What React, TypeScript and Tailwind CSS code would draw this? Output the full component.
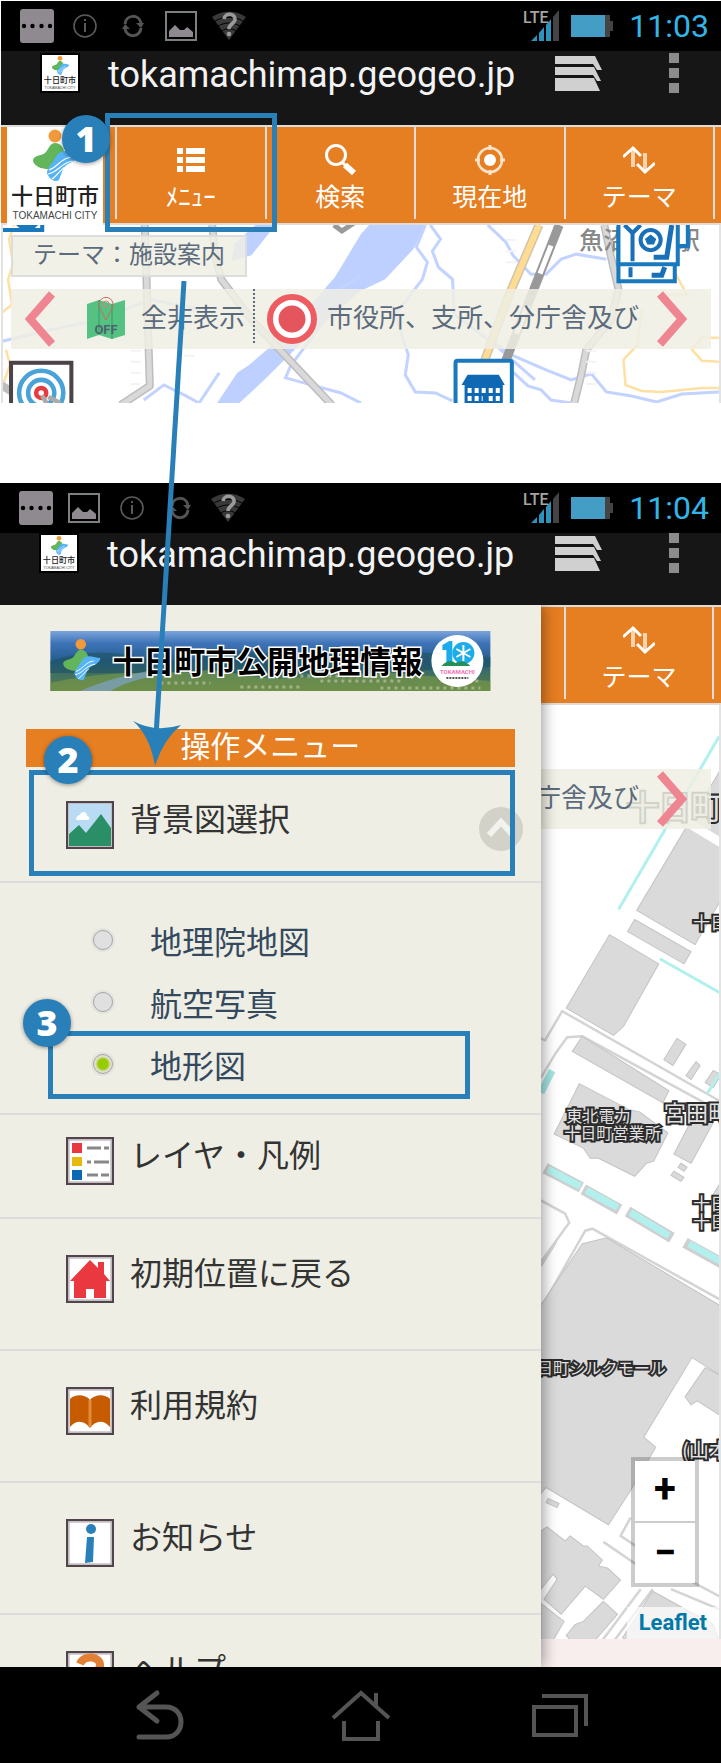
import { useState } from 'react'
import type { ReactNode } from 'react'
import clsx from 'clsx'

const JP = "font-['Noto_Sans_CJK_JP',sans-serif]"
const ROBOTO = 'font-[Roboto,sans-serif]'

function CityMark() {
  return (
    <g>
      <circle cx="48" cy="9" r="6.5" fill="#f29a3b" />
      <path d="M48 16c6 0 10 6 9 12-3 6-9 9-13 14-6 1-18-2-18-9 1-5 8-4 12-7 4-4 5-10 10-10z" fill="#62b55a" />
      <path d="M50 28c8-8 15-1 22-2 2 4-6 9-11 11-6 4-6 9-9 16-4 3-10-1-12-7 0-5 5-9 10-18z" fill="#56b4f5" />
      <path d="M42 43c8-2 12-12 22-13M41 47c9-1 14-12 25-13M45 52c4-2 8-9 13-12" stroke="#fff" strokeWidth="1.2" fill="none" />
    </g>
  )
}

function CityLogo({ className }: { className: string }) {
  return (
    <svg viewBox="0 0 96 98" className={className} role="img" aria-label="十日町市">
      <rect width="96" height="98" fill="#fff" />
      <CityMark />
      <g textAnchor="middle" className={JP}>
        <text x="48" y="77" fontSize="22" fontWeight="500" fill="#222">十日町市</text>
        <text x="48" y="92" fontSize="10" fill="#444" className="font-['Liberation_Sans',sans-serif]">TOKAMACHI CITY</text>
      </g>
    </svg>
  )
}

const statusIcons: Record<string, ReactNode> = {
  message: (
    <>
      <rect x="0" y="0" width="34" height="34" rx="3" fill="#8e8a8f" />
      {[4, 12.5, 21.5, 30].map((x) => (
        <circle key={x} cx={x} cy="17" r="2.2" fill="#000" />
      ))}
    </>
  ),
  info: (
    <g stroke="#5a5a5a" fill="none">
      <circle cx="17" cy="17" r="11" strokeWidth="1.6" />
      <path d="M17 14v9M17 10v2" strokeWidth="2" />
    </g>
  ),
  sync: (
    <g stroke="#555" fill="none" strokeWidth="3">
      <path d="M9 15c1-10 14-10 16-1M25 19c-1 10-14 10-16 1" />
      <path d="M20 14h8l-3 5zM14 20H6l3-5z" fill="#555" stroke="none" />
    </g>
  ),
  picture: (
    <>
      <rect x="2" y="3" width="30" height="28" fill="none" stroke="#7d8080" strokeWidth="2" />
      <path d="M5 28v-6l6-6 5 5h4l3-3 6 5v5z" fill="#8e8a8f" />
    </>
  ),
  wifi: (
    <>
      <path d="M0 8C10 1 24 1 34 8L17 31z" fill="#393939" />
      <path d="M3 12c9-5 19-5 28 0M6 17c7-4 15-4 22 0M10 22c4-3 10-3 14 0" stroke="#000" fill="none" />
      <path d="M12 10c1-7 12-6 11 1-1 4-6 4-6 9" stroke="#9a9a9a" strokeWidth="3.6" fill="none" />
      <circle cx="17" cy="25" r="2.3" fill="#9a9a9a" />
    </>
  ),
}

function StatusBar({ icons, time }: { icons: string[]; time: string }) {
  return (
    <div className="flex h-[50px] items-center justify-between bg-black pr-3 pl-[19px]">
      <div className="flex gap-3.5">
        {icons.map((name) => (
          <svg key={name} viewBox="0 0 34 34" className="size-[34px]" aria-label={name}>
            {statusIcons[name]}
          </svg>
        ))}
      </div>
      <div className="flex items-center">
        <svg viewBox="0 0 36 34" className="mr-3 h-[34px] w-9" aria-label="signal">
          <path d="M8 32l6-6v6zM16 24l5-6v14h-5zM23 16l5-6v22h-5z" fill="#2c93bd" />
          <path d="M30 8l6-7v31h-6z" fill="#444" />
          <text x="0" y="14" fontSize="16" fontWeight="500" fill="#a5a5a5" className={ROBOTO}>LTE</text>
        </svg>
        <svg viewBox="0 0 42 22" className="mr-4 h-[22px] w-[42px]" aria-label="battery">
          <path d="M33 0h6v6h3v10h-3v6h-6z" fill="#444" />
          <rect width="34" height="22" fill="#439dc4" />
        </svg>
        <time className={clsx(ROBOTO, 'text-[32px] leading-none text-[#33b5e5]')}>{time}</time>
      </div>
    </div>
  )
}

function AddressBar({ className }: { className?: string }) {
  return (
    <div className={clsx('flex items-start justify-between bg-[#161616] pr-[42px] pl-[39px]', className)}>
      <div className="flex items-start gap-7">
        <div className="border-2 border-black">
          <CityLogo className="size-9 bg-white" />
        </div>
        <p className={clsx(ROBOTO, 'text-4xl leading-[44px] text-[#f3f3f3]')}>tokamachimap.geogeo.jp</p>
      </div>
      <div className="flex gap-[66px]">
        <button type="button" aria-label="タブ">
          <svg viewBox="0 0 48 40" className="h-10 w-12" fill="#d0d0d0">
            <path d="M0 3h40l7 14h-5l-4-6H0zM0 14h39l7 14h-4l-4-6H0zM0 25h39l6 13H0z" />
          </svg>
        </button>
        <button type="button" aria-label="その他" className="flex flex-col gap-[5px]">
          <span className="size-2.5 bg-[#8c8c8c]" />
          <span className="size-2.5 bg-[#8c8c8c]" />
          <span className="size-2.5 bg-[#8c8c8c]" />
        </button>
      </div>
    </div>
  )
}

const toolIcons: Record<string, ReactNode> = {
  menu: <path d="M2 4h6v6H2zM2 13h6v6H2zM2 22h6v6H2zM11 4h19v6H11zM11 13h19v6H11zM11 22h19v6H11z" fill="#fff" />,
  search: (
    <g stroke="#fff" fill="none">
      <circle cx="12" cy="11" r="9.5" strokeWidth="3" />
      <path d="M18 18l4 4" strokeWidth="3" />
      <path d="M21 21l9 8" strokeWidth="6" />
    </g>
  ),
  locate: (
    <g stroke="#fbe3cc" fill="none">
      <circle cx="16" cy="16" r="12" strokeWidth="2.6" />
      <circle cx="16" cy="16" r="6" fill="#fff" stroke="none" />
      <path d="M16 1v5M16 26v5M1 16h5M26 16h5" strokeWidth="3" />
    </g>
  ),
  theme: (
    <g fill="none">
      <path d="M10 4v19M22 9v19" stroke="#f8d3ae" strokeWidth="4" />
      <path d="M0 13l10-9 8 8M14 20l8 8 10-9" stroke="#fff" strokeWidth="3" />
    </g>
  ),
}

function ToolButton({ icon, label, className, children }: { icon: string; label: string; className?: string; children?: ReactNode }) {
  return (
    <button
      type="button"
      className={clsx(JP, 'relative flex flex-col items-center border-[#ddd] pt-[17px] text-[25px] text-white', className)}
    >
      <svg viewBox="0 0 32 32" className="size-8">
        {toolIcons[icon]}
      </svg>
      <span className="pt-0.5 leading-[35px]">{label}</span>
      {children}
    </button>
  )
}

function Badge({ n, className }: { n: number; className: string }) {
  return (
    <span
      className={clsx(
        "absolute z-20 flex size-12 items-center justify-center rounded-full bg-[#2980b9] font-['Open_Sans',sans-serif] text-4xl font-extrabold text-white shadow-[0_1px_4px_rgba(0,0,0,0.4)]",
        className,
      )}
    >
      {n}
    </span>
  )
}

function Frame({ className }: { className: string }) {
  return <span className={clsx('pointer-events-none absolute z-10 border-[5px] border-[#2980b9]', className)} />
}

function Chevron({ dir }: { dir: 'left' | 'right' }) {
  return (
    <button type="button" aria-label={dir === 'left' ? '前へ' : '次へ'} className="shrink-0">
      <svg viewBox="0 0 30 56" className="h-14 w-[30px]">
        <path d={dir === 'left' ? 'M27 3L5 28l22 25' : 'M3 3l22 25L3 53'} stroke="#ee8590" strokeWidth="8" fill="none" />
      </svg>
    </button>
  )
}

function RegionMap() {
  return (
    <svg viewBox="3 226 716 177" preserveAspectRatio="xMidYMid slice" className="absolute inset-0 size-full">
      <rect x="3" y="226" width="716" height="177" fill="#fff" />
      <g fill="#bdd0ff">
        <path d="M425 226l-12 24-28 30-25 12-60 53-35 35-25 23h-15l25-38 35-30 50-57 26-43 8-9z" />
        <path d="M256 226h20l-24 30-20 6 3-17z" />
        <path d="M218 403l20-30 12-8-8 20-10 18z" />
      </g>
      <path
        d="M3 342l50-12 50-10 48-20 50 10M145 400l20-15 20 10 15 8 20-30M361 403l-20-10-55-15 5-12 30-40 10-30 30-20M425 226l-9 22 11 15-5 17-27 35 13 40-3 20 10 17 20 1 17 8M430 226l10 14-8 12 6 16 14 12 2 35 40 30 40 35M487 226l18 17 7 13 18 19h15l15-15 15-5 30 5M490 340l20 15 35 15 25 10 20-6 15 18 25 4 25 6 25-8 39-2M512 372l15 14 13 4 10 10 20 3"
        fill="none"
        stroke="#c3d3ff"
        strokeWidth="3"
      />
      <path
        d="M16 226l-5 14 4 25-5 15 4 25-11 9M6 382l6-17-4-15M674 275l11 20h-20M640 310l-4 35-14 15 2 25 16 6 20 1 40-4h19M719 338h-19l-10 12 10 11 19 1"
        fill="none"
        stroke="#ffe0a3"
        strokeWidth="2.5"
      />
      <g fill="none" strokeLinejoin="round">
        <path d="M146 226l5 160-29 19M213 226l3 30 6 24 30 40 80 85M3 385l11 7M603 226l6 29 8 35-7 30-25 30-5 25-7 28" stroke="#bdbdbd" strokeWidth="8" />
        <path d="M146 226l5 160-29 19M213 226l3 30 6 24 30 40 80 85M603 226l6 29 8 35-7 30-25 30-5 25-7 28" stroke="#d9d9d9" strokeWidth="5" />
        <path d="M538 226l-30 70-26 70" stroke="#cfc5ad" strokeWidth="9" />
        <path d="M538 226l-30 70-26 70" stroke="#ffdc91" strokeWidth="6" />
        <path d="M558 226l-57 145" stroke="#999" strokeWidth="9" />
        <path d="M558 226l-57 145" stroke="#fff" strokeWidth="5" strokeDasharray="30 34" strokeDashoffset="-22" />
        <path d="M137 350v40M190 300v60M510 240v30M570 290v40M590 350v40" stroke="#f3f3f3" strokeWidth="10" strokeDasharray="2 9" />
      </g>
      <path d="M334 226l8 6 12-8" stroke="#999" strokeWidth="5" fill="none" />
      <text x="578" y="250" fontSize="24" fontWeight="500" fill="#888" className={JP}>魚沼中条駅</text>
      {/* facility markers */}
      <g stroke="#1a78bd" strokeWidth="4" fill="#fff">
        <path d="M0 231h44v-10" />
        <path d="M660 220h26v27h-26z" />
        <path d="M617 230h56v52h-56z" />
        <path d="M617 220h59v45h-59z" />
        <rect x="455" y="361" width="56" height="56" rx="2" />
      </g>
      <path d="M18 226h22c-6 7-16 7-22 0z" fill="#1a78bd" />
      <g fill="none" stroke="#1a70b8">
        <path d="M623 226l8 8 8-8M631 234v28M629 268v10" strokeWidth="4" />
        <path d="M670 226l-5 32h-13M663 268l-3 8h-10" strokeWidth="5" />
        <circle cx="649" cy="241" r="10" strokeWidth="4" />
        <path d="M649 236l5 4-2 5h-6l-2-5z" fill="#1a70b8" />
      </g>
      <g fill="#0f68b3">
        <path d="M467 375h31l6 10h-43z" />
        <path d="M464 385h38v20h-38z" />
        <path d="M467 388h4v5h-4zM474 388h4v5h-4zM481 388h4v5h-4zM488 388h4v5h-4zM495 388h4v5h-4zM467 396h4v5h-4zM474 396h4v5h-4zM481 396h1v5h-1zM488 396h4v5h-4zM495 396h4v5h-4z" fill="#fff" />
      </g>
      <rect x="13" y="363" width="60" height="60" fill="#fff" stroke="#4b4347" strokeWidth="4" />
      <g fill="none" strokeWidth="4.5">
        <circle cx="43" cy="393" r="22" stroke="#4aa3d8" />
        <circle cx="43" cy="393" r="13" stroke="#4aa3d8" />
        <circle cx="43" cy="393" r="5" stroke="#e63b40" />
        <path d="M44 396l6 10M50 397l12 6" stroke="#aaa" />
      </g>
    </svg>
  )
}

function TownMap() {
  return (
    <svg viewBox="541 705 177 934" preserveAspectRatio="xMaxYMin slice" className="absolute inset-0 size-full">
      <rect x="541" y="705" width="180" height="940" fill="#fff" />
      <g fill="none" stroke="#d4d4d4" strokeWidth="2.5">
        <path d="M541 1036l4 2 17-29 156 89M541 1075l15-25 11-15 15-1 136 74M541 1197l24 13 4 9-28 39M541 1304l44-77 7-2 126 70M541 1262l15-24M598 1639l42-56M610 1639l42-56M630 1512l-10 18 15 10M603 1536l32 22M690 1575l28 15M670 1583l48 20" />
      </g>
      <g fill="#dadada" stroke="#c4c4c4" strokeWidth="1">
        <path d="M720 768l-84 141 58 34 26-45z" />
        <path d="M634 918l56 32-7 12-56-32zM609 933l49 29-35 62-10 9-47-27zM582 1034l86 54-6 12-90-51z" />
        <path d="M676 1036l9 6-13 21-9-6zM695 1059l4 4-9 14-5-4zM712 1068l8 4-8 13-8-5zM690 1118h23l-23 42-17-9zM680 1160l6 4-3 4-6-4zM673 1168l10 6-3 4-10-6z" />
        <path d="M579 1081l50 26 10 2 28 21-14 28-7 2-12 13-36-18h-8l-7-10-29-14z" />
        <path d="M720 1178l-10 16 10 5zM582 1240l24-6 114 68v69l-29-18-48 79 12 10-25 43-22 34-62-37-6 7v-187z" />
        <path d="M704 1363l16 8v40l-24-15-6 4-6-8zM548 1493l11 5-2 4-11-5z" />
        <path d="M541 1525l6-4 18 14 5-5 13 10h4l15 14-4 6 9 2 13 12-17 19-18-13-24 28-17-15 13-20-4-5-12 15z" />
        <path d="M603 1595l14 13-27 31h-15l-9-10 9-11 8-3zM541 1597l23 18-14 24h-9zM652 1585l60 33 8 21h-88l-10-8z" />
      </g>
      <path d="M684 820l36 22" stroke="#fff" strokeWidth="9" />
      <g fill="none" stroke="#b2f0ee">
        <path d="M718 736L618 908M659 957l60 34M720 1068l-14 23" strokeWidth="3" />
        <path d="M541 1090l11-22" stroke="#a5e5e3" strokeWidth="7" />
        <path d="M545 1165l36 19M583 1186l36 20M627 1208l44 26M684 1239l40 22" stroke="#cfcfcf" strokeWidth="11" />
        <path d="M548 1166l32 17M586 1187l31 17M630 1209l38 23M688 1240l36 20" strokeWidth="7" />
      </g>
      <g className={JP} fontSize="16" fill="#e2e2e2" stroke="#2b2b2b" strokeWidth="4" paintOrder="stroke">
        <text x="566" y="1119">東北電力</text>
        <text x="564" y="1136">十日町営業所</text>
        <text x="663" y="1118" fontSize="22">宮田町</text>
        <text x="692" y="927" fontSize="17">十日町</text>
        <text x="692" y="1206" fontSize="17">十日町</text>
        <text x="692" y="1224" fontSize="17">十日町</text>
        <text x="665" y="1369" textAnchor="end">十日町シルクモール</text>
        <text x="681" y="1453" fontSize="20">(山本</text>
        <text x="626" y="818" fontSize="32">十日町</text>
      </g>
    </svg>
  )
}

function IconBox({ children }: { children: ReactNode }) {
  return (
    <svg viewBox="0 0 48 48" className="size-12 shrink-0">
      <rect x="1" y="1" width="46" height="46" fill="#fff" stroke="#4f454a" strokeWidth="2.5" />
      <rect x="3" y="3" width="42" height="42" fill="none" stroke="#b9b0b5" strokeWidth="1.2" />
      {children}
    </svg>
  )
}

const entryIcons: Record<string, ReactNode> = {
  background: (
    <>
      <rect x="3" y="3" width="42" height="42" fill="#b9dbf3" />
      <path d="M10 19c0-4 3-5 4-5 2-5 7-3 7 1 3 0 3 4 1 4z" fill="#fff" />
      <path d="M3 33l10-9 7 8 15-19 10 14v18H3z" fill="#2a8f66" />
    </>
  ),
  layers: (
    <>
      <path d="M6 6h10v10H6z" fill="#e9383f" />
      <path d="M6 20h10v9H6z" fill="#e8b90c" />
      <path d="M6 33h10v10H6z" fill="#0b68b5" />
      <path d="M21 11h14M38 11h5M21 25h4M28 25h15M21 38h11M35 38h8" stroke="#888" strokeWidth="3" />
    </>
  ),
  home: <path d="M24 5L4 26h4v17h12v-9h8v9h12V26h4l-6-7V7h-6v6z" fill="#e9383f" />,
  terms: (
    <>
      <path d="M4 12c5-5 15-5 20 1 5-6 15-6 20-1v28c-6-7-14-7-20 1-6-8-14-8-20-1z" fill="#c75b00" />
      <path d="M24 13v27" stroke="#e08c3c" strokeWidth="3" />
    </>
  ),
  news: (
    <g fill="#2980b9">
      <circle cx="25" cy="10" r="5" />
      <path d="M21 18h7l-1 25-8 1z" />
    </g>
  ),
  help: <path d="M14 13c4-10 21-8 20 2-1 6-9 7-9 13" stroke="#e17f35" strokeWidth="8" fill="none" />,
}

const entries = [
  { id: 'layers', label: 'レイヤ・凡例', space: 'border-b-2 pt-[22px] pb-8' },
  { id: 'home', label: '初期位置に戻る', space: 'border-b-2 pt-9 pb-[46px]' },
  { id: 'terms', label: '利用規約', space: 'border-b-2 pt-9 pb-[46px]' },
  { id: 'news', label: 'お知らせ', space: 'border-b-2 pt-9 pb-[46px]' },
  { id: 'help', label: 'ヘルプ', space: 'h-[52px] overflow-hidden pt-9' },
]

const entryClass = 'flex w-full items-start gap-4 border-[#dcdcdc] pl-[66px] text-left text-[32px] leading-8 text-[#333]'

function Banner() {
  return (
    <svg viewBox="0 0 440 60" className="mx-[50px] mt-[26px] h-[60px]" role="img" aria-label="十日町市公開地理情報">
      <defs>
        <linearGradient id="sky" x1="0" y1="0" x2="0" y2="1">
          <stop offset="0" stopColor="#7ba4dc" />
          <stop offset="0.2" stopColor="#3f74b8" />
          <stop offset="0.5" stopColor="#245d8c" />
          <stop offset="0.7" stopColor="#3d6f62" />
          <stop offset="1" stopColor="#5b7d4c" />
        </linearGradient>
      </defs>
      <rect width="440" height="60" fill="url(#sky)" />
      <path d="M0 30q40-14 90-4t80-8l60 6 90-6 120 8v10l-120 6H0z" fill="#1f5263" opacity="0.6" />
      <path d="M0 52q50-12 110-10l50-3 60 9 120-6 100 8v10H0z" fill="#7b9b48" opacity="0.6" />
      <path d="M30 60q30-14 80-22l10 4q-40 6-60 18z" fill="#7fa3c8" opacity="0.7" />
      <path d="M110 52h50M190 56h60M270 50h80M250 45h60M330 57h100M390 50h40" stroke="#c9c9b0" strokeWidth="3" strokeDasharray="3 4" opacity="0.6" />
      <svg x="8" y="6" width="48" height="48" viewBox="20 0 60 60">
        <CityMark />
      </svg>
      <text x="62" y="42" fontSize="31" fontWeight="700" fill="#000" stroke="#fff" strokeWidth="3" paintOrder="stroke" className={JP}>
        十日町市公開地理情報
      </text>
      <circle cx="407" cy="30" r="26" fill="#fff" />
      <path d="M392 14l7-4h3v23h-6V19h-4z" fill="#1badea" />
      <circle cx="413" cy="22" r="11" fill="#1badea" />
      <path d="M413 14v16M406 18l14 8M406 26l14-8" stroke="#fff" strokeWidth="2" />
      <path d="M391 35q8-8 14-3 8-4 15 3z" fill="#23905a" />
      <text x="407" y="43" fontSize="6" fontWeight="700" textAnchor="middle" fill="#f472b6" className={ROBOTO}>TOKAMACHI</text>
      <path d="M396 47h22" stroke="#555" strokeWidth="2" strokeDasharray="2 1" />
    </svg>
  )
}

function Drawer() {
  const [base, setBase] = useState('地形図')
  return (
    <nav className={clsx(JP, 'relative z-10 flex w-3/4 shrink-0 flex-col bg-[#eeeee4] shadow-[2px_0_14px_rgba(0,0,0,0.4)]')}>
      <Banner />
      <h2 className="mx-[26px] mt-[38px] bg-[#e67e22] pb-2 text-center text-[30px] leading-[30px] text-white">操作メニュー</h2>
      <div className="relative">
        <button type="button" className={clsx(entryClass, 'border-b-2 pt-[34px] pb-8')}>
          <IconBox>{entryIcons.background}</IconBox>
          背景図選択
          <svg viewBox="0 0 44 44" className="mt-1.5 mr-[18px] -mb-2 ml-auto size-11">
            <circle cx="22" cy="22" r="22" fill="#d2d2c9" />
            <path d="M10 28l12-13 12 13" stroke="#f3f3ee" strokeWidth="6" fill="none" />
          </svg>
        </button>
        <Frame className="top-[3px] right-[26px] bottom-[7px] left-[29px]" />
        <Badge n={2} className="-top-[31px] left-11" />
      </div>
      <div className="border-b-2 border-[#dcdcdc] pt-[26px] pb-[18px] text-[32px] text-[#34495e]">
        {['地理院地図', '航空写真', '地形図'].map((name) => (
          <label key={name} className="relative flex h-[62px] items-center gap-[37px] pl-[93px] leading-9">
            <input
              type="radio"
              name="base"
              checked={base === name}
              onChange={() => setBase(name)}
              className="size-5 appearance-none rounded-full border border-[#a5a5a5] bg-[#e0e0e0] shadow-[0_0_0_2px_#e3e3df] checked:bg-[radial-gradient(circle,#99cc00_38%,#e0e0d0_60%)]"
            />
            {name}
            {name === '地形図' && (
              <>
                <Frame className="-top-[2px] right-[71px] -bottom-1 left-12" />
                <Badge n={3} className="-top-[34px] left-[23px]" />
              </>
            )}
          </label>
        ))}
      </div>
      {entries.map((entry) => (
        <button key={entry.id} type="button" className={clsx(entryClass, entry.space)}>
          <IconBox>{entryIcons[entry.id]}</IconBox>
          {entry.label}
        </button>
      ))}
    </nav>
  )
}

function MapScreen() {
  return (
    <section className="ml-px">
      <StatusBar icons={['message', 'info', 'sync', 'picture', 'wifi']} time="11:03" />
      <AddressBar className="h-[74px] pt-0.5" />
      <div className="relative z-10 flex border-y-2 border-[#ddd] bg-[#e67e22] pr-[6px] pl-[6px]">
        <div className="relative mr-3 -mb-0.5 bg-white">
          <CityLogo className="h-[98px] w-24" />
          <Badge n={1} className="-top-3 left-[55px]" />
        </div>
        <div className="mb-1 grid flex-1 grid-cols-4 border-r-2 border-[#ddd]">
          <ToolButton icon="menu" label="ﾒﾆｭｰ" className="border-l-2">
            <Frame className="-top-[14px] -right-[12px] -bottom-[13px] -left-3" />
          </ToolButton>
          <ToolButton icon="search" label="検索" className="border-l-2" />
          <ToolButton icon="locate" label="現在地" className="border-l-2" />
          <ToolButton icon="theme" label="テーマ" className="border-l-2" />
        </div>
      </div>
      <div className={clsx(JP, 'relative border-x-2 border-[#e3e3e3] pt-2.5 pr-2 pb-[54px] pl-2 text-[#5c6b7c]')}>
        <RegionMap />
        <p className="relative w-fit border-2 border-[#ddd] bg-[#eeeee4]/85 px-5 pb-1.5 text-2xl leading-8">テーマ：施設案内</p>
        <div className="relative mt-3 flex h-[60px] items-center bg-[#eeeee4]/85 pr-6 pl-[14px] text-[26px] whitespace-nowrap">
          <Chevron dir="left" />
          <svg viewBox="0 0 38 46" className="mr-4 ml-8 h-[46px] w-[38px] shrink-0">
            <path d="M0 8l12-4 13 4 13-4v35l-13 4-13-4-12 4z" fill="#55c283" />
            <path d="M12 4v35M25 8v35" stroke="#46ad73" strokeWidth="2" />
            <path d="M19 24l-6-12a7 7 0 1112 0z" stroke="#c96b5c" fill="none" />
            <circle cx="19" cy="8" r="3" stroke="#dd7c70" fill="none" />
            <text x="19" y="38" fontSize="13" fontWeight="700" textAnchor="middle" fill="#4d6470" className={ROBOTO}>OFF</text>
          </svg>
          <span className="pb-2">全非表示</span>
          <span className="mr-3 ml-2 h-[54px] self-start border-l-2 border-dotted border-[#5c6b7c]" />
          <svg viewBox="0 0 50 50" className="mr-2.5 size-[50px] shrink-0">
            <circle cx="25" cy="25" r="22" fill="#fff" stroke="#ee5c62" strokeWidth="6" />
            <circle cx="25" cy="25" r="13.5" fill="#e4555e" />
          </svg>
          <span className="pb-2">市役所、支所、分庁舎及び</span>
          <span className="ml-auto flex">
            <Chevron dir="right" />
          </span>
        </div>
      </div>
    </section>
  )
}

function MenuScreen() {
  return (
    <section>
      <StatusBar icons={['message', 'picture', 'info', 'sync', 'wifi']} time="11:04" />
      <AddressBar className="h-[72px]" />
      <div className="flex overflow-hidden">
        <Drawer />
        <div className="flex min-w-0 flex-1 flex-col bg-[#f8eeee]">
          <div className="flex justify-end border-y-2 border-[#ddd] bg-[#e67e22] pr-[7px] pb-1">
            <ToolButton icon="theme" label="テーマ" className="h-[92px] w-[150px] border-x-2" />
          </div>
          <div className="relative mb-7 flex flex-1 flex-col items-end overflow-hidden border-r-2 border-[#e3e3e3] pt-16">
            <TownMap />
            <div className={clsx(JP, 'relative mr-2 flex h-[60px] w-full items-center justify-end gap-[18px] bg-[#eeeee4]/85 pr-6 text-[26px] whitespace-nowrap text-[#5c6b7c]')}>
              <span className="pb-2">分庁舎及び</span>
              <Chevron dir="right" />
            </div>
            <div className={clsx(ROBOTO, 'relative mt-auto mr-5 mb-5 flex flex-col gap-0.5 border-4 border-black/20 bg-[#ccc] bg-clip-padding text-[40px] font-bold text-black')}>
              <button type="button" aria-label="拡大" className="flex size-[60px] items-center justify-center bg-white pb-1">+</button>
              <button type="button" aria-label="縮小" className="flex size-[60px] items-center justify-center bg-white">−</button>
            </div>
            <a href="#leaflet" className={clsx(ROBOTO, 'relative bg-white/70 px-3 text-[22px] leading-8 font-bold text-[#0078a8]')}>
              Leaflet
            </a>
          </div>
        </div>
      </div>
      <div className="flex items-center justify-between bg-black px-[133px] py-[18px]">
        <button type="button" aria-label="戻る">
          <svg viewBox="0 0 56 60" className="h-[60px] w-14" fill="none" stroke="#555" strokeWidth="5" strokeLinecap="round" strokeLinejoin="round">
            <path d="M24 8L6 22l18 14M6 22h27c20 0 20 30 0 30H6" />
          </svg>
        </button>
        <button type="button" aria-label="ホーム">
          <svg viewBox="0 0 60 60" className="size-[60px]" fill="none" stroke="#555" strokeWidth="4">
            <path d="M2 33L30 8l28 25M45 8v14M13 36v18h34V36" />
          </svg>
        </button>
        <button type="button" aria-label="履歴">
          <svg viewBox="0 0 56 60" className="h-[60px] w-14" fill="none" stroke="#555" strokeWidth="4">
            <path d="M2 22h42v28H2zM10 11h44v30" />
          </svg>
        </button>
      </div>
    </section>
  )
}

export default function App() {
  return (
    <main className="relative overflow-hidden bg-white pt-px">
      <MapScreen />
      <div className="h-20" />
      <MenuScreen />
      {/* pointer from the toolbar menu button to the drawer */}
      <svg viewBox="0 0 60 490" className="pointer-events-none absolute top-[281px] left-[130px] z-10 h-[490px] w-[60px]">
        <path d="M54 0L26 455" stroke="#2980b9" strokeWidth="5" />
        <path d="M25 485Q20 455 3 440q22 12 48 4-18 15-26 41z" fill="#2980b9" />
      </svg>
    </main>
  )
}
